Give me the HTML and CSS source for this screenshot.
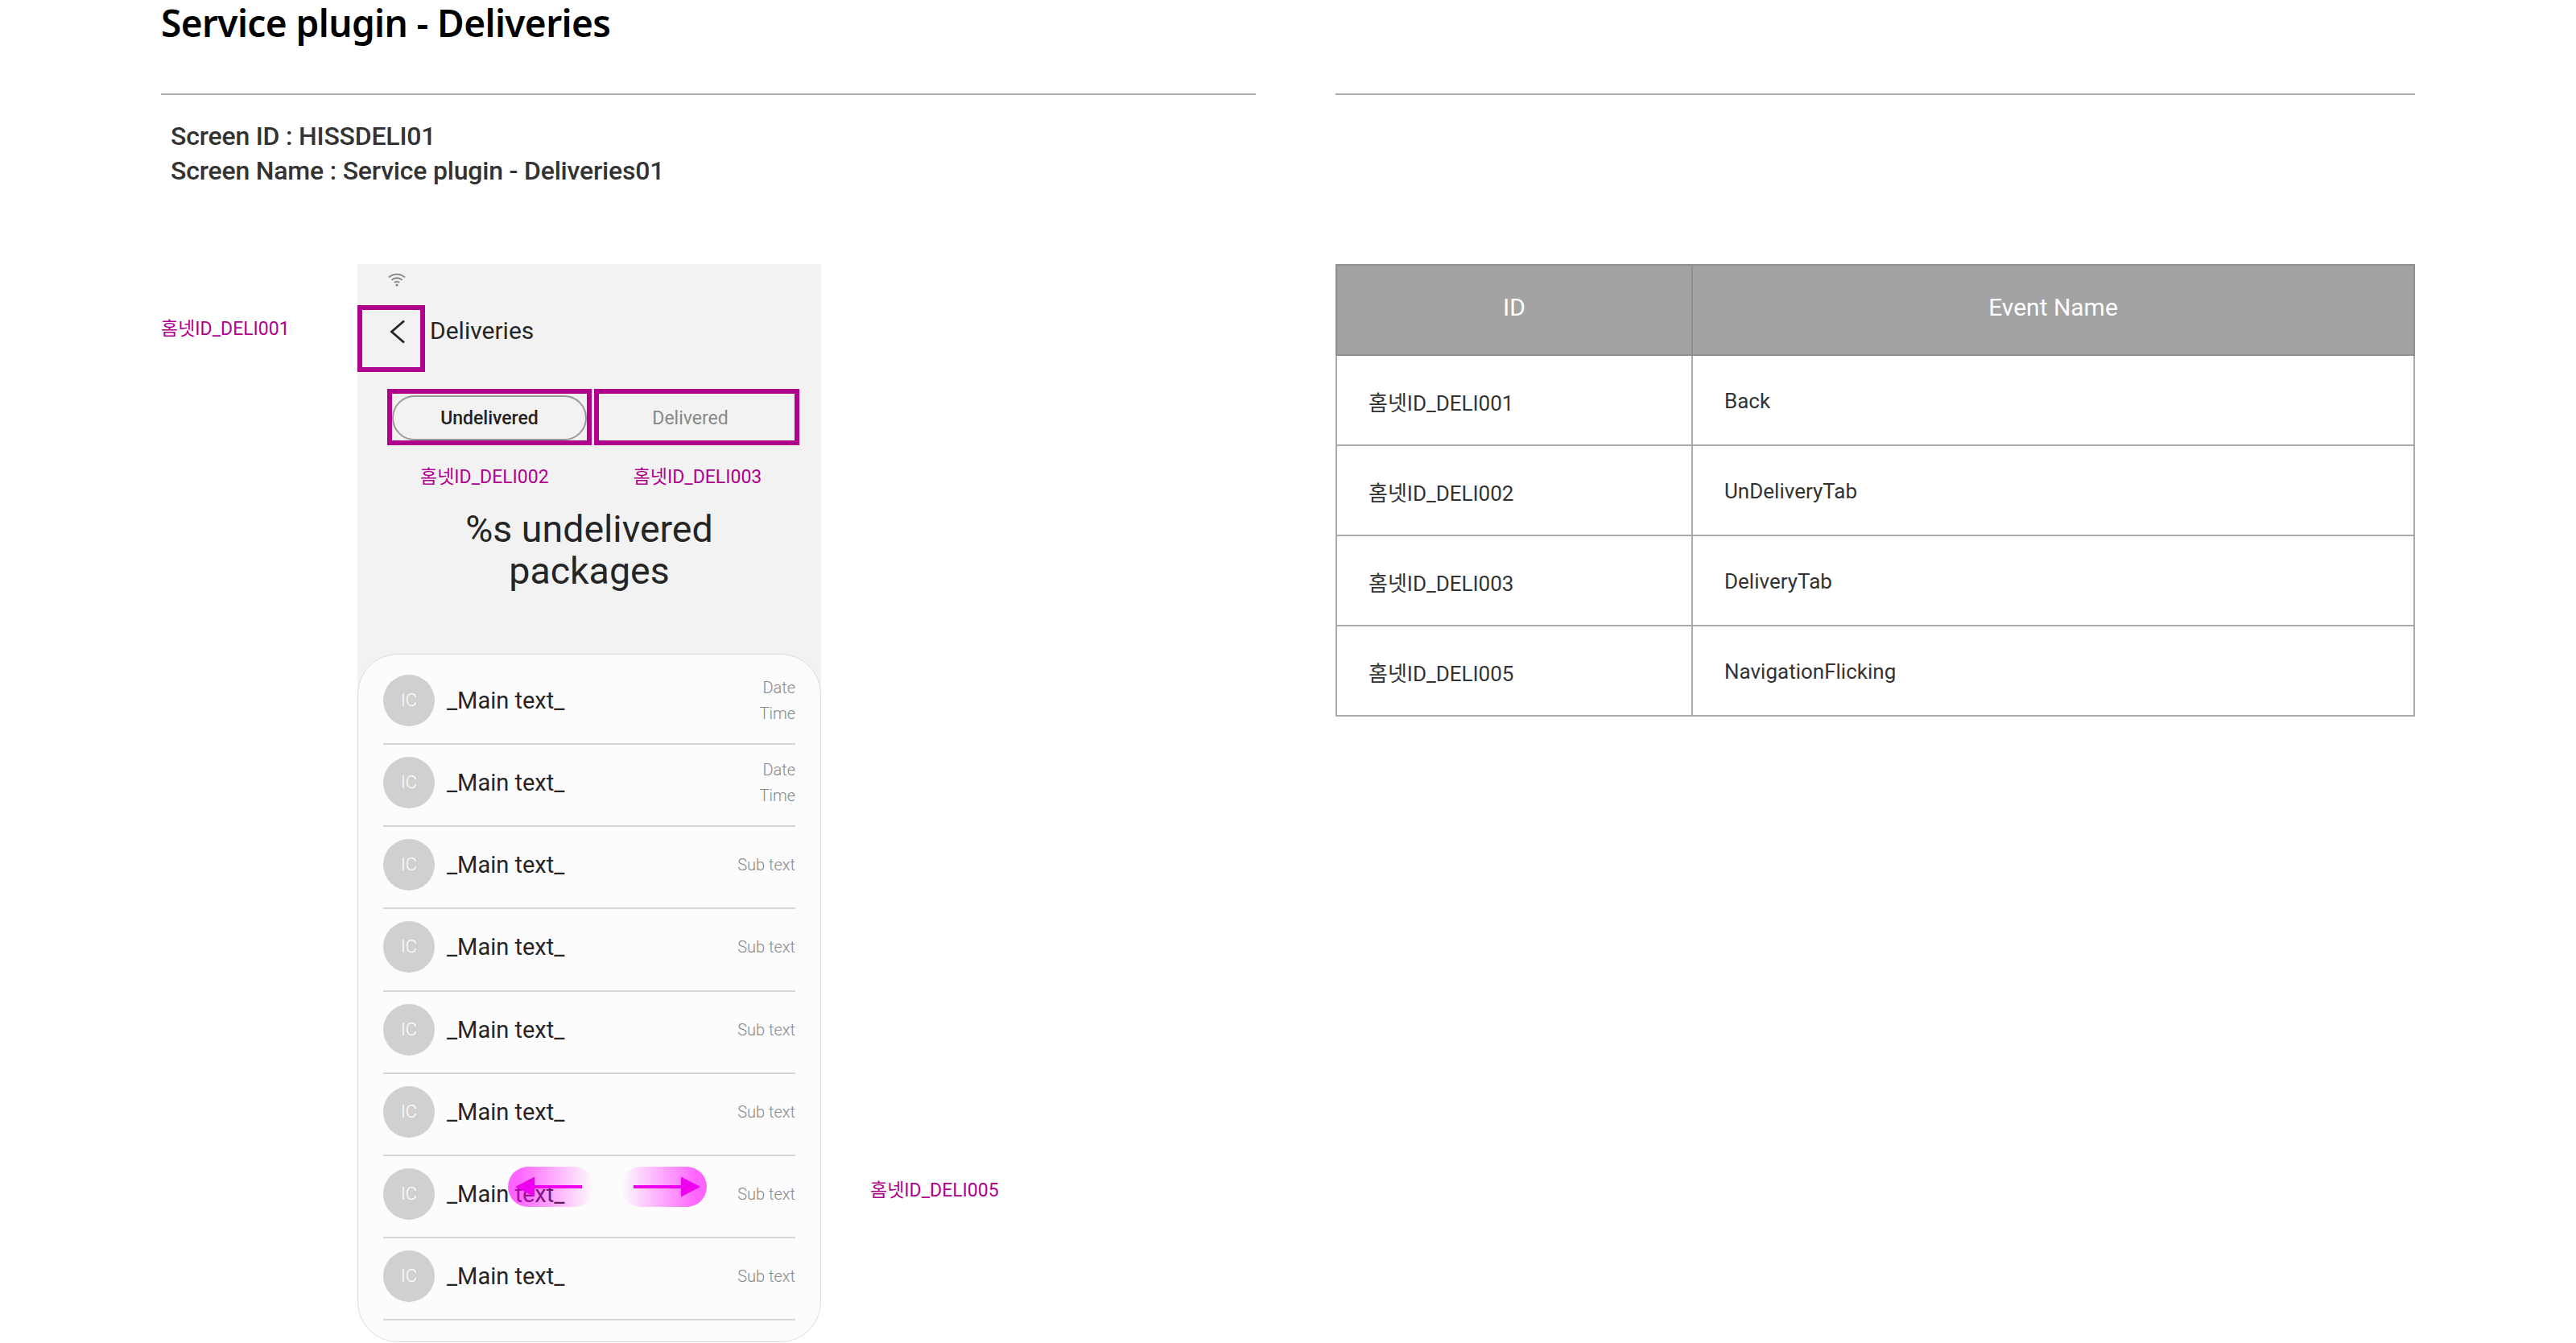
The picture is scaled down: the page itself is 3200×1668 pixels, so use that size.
FILE: index.html
```html
<!DOCTYPE html>
<html lang="en">

<head>
    <meta charset="UTF-8">
    <title>Service plugin - Deliveries</title>
    <link rel="stylesheet" href="styles.css">
</head>

<body>
    <div class="page">
        <div class="left-col">
            <h1 class="title">Service plugin - Deliveries</h1>
            <div class="screen-info">
                <div>Screen ID : HISSDELI01</div>
                <div>Screen Name : Service plugin - Deliveries01</div>
            </div>

            <div class="phone">
                <div class="note note-back">홈넷ID_DELI001</div>
                <div class="note note-flick">홈넷ID_DELI005</div>

                <div class="status-bar">
                    <svg class="wifi" viewBox="0 0 22 18" width="22" height="18">
                        <path d="M1 6.5C6.5 1.2 15.5 1.2 21 6.5" fill="none" stroke="#808080" stroke-width="1.8"/>
                        <path d="M4.4 9.8C8 6.4 14 6.4 17.6 9.8" fill="none" stroke="#808080" stroke-width="1.8"/>
                        <path d="M7.8 13C9.6 11.4 12.4 11.4 14.2 13" fill="none" stroke="#808080" stroke-width="1.8"/>
                        <circle cx="11" cy="16" r="1.6" fill="#808080"/>
                    </svg>
                </div>
                <div class="app-bar">
                    <div class="back-box">
                        <svg class="chevron" viewBox="0 0 20 30" width="20" height="30">
                            <path d="M18 1.5L2.5 15L18 28.5" fill="none" stroke="#252525" stroke-width="2.8"/>
                        </svg>
                    </div>
                    <div class="app-title">Deliveries</div>
                </div>
                <div class="tabs">
                    <div class="tab-box">
                        <div class="tab-pill">Undelivered</div>
                    </div>
                    <div class="tab-box tab-off">Delivered</div>
                </div>
                <div class="tab-notes">
                    <div class="note-tab-a">홈넷ID_DELI002</div>
                    <div class="note-tab-b">홈넷ID_DELI003</div>
                </div>
                <div class="headline">%s undelivered<br>packages</div>

                <div class="list">
                    <div class="row">
                        <div class="circle">IC</div>
                        <div class="main-text">_Main text_</div>
                        <div class="sub-text two-lines"><span>Date</span><span>Time</span></div>
                    </div>
                    <div class="row">
                        <div class="circle">IC</div>
                        <div class="main-text">_Main text_</div>
                        <div class="sub-text two-lines"><span>Date</span><span>Time</span></div>
                    </div>
                    <div class="row">
                        <div class="circle">IC</div>
                        <div class="main-text">_Main text_</div>
                        <div class="sub-text">Sub text</div>
                    </div>
                    <div class="row">
                        <div class="circle">IC</div>
                        <div class="main-text">_Main text_</div>
                        <div class="sub-text">Sub text</div>
                    </div>
                    <div class="row">
                        <div class="circle">IC</div>
                        <div class="main-text">_Main text_</div>
                        <div class="sub-text">Sub text</div>
                    </div>
                    <div class="row">
                        <div class="circle">IC</div>
                        <div class="main-text">_Main text_</div>
                        <div class="sub-text">Sub text</div>
                    </div>
                    <div class="row">
                        <div class="circle">IC</div>
                        <div class="main-text">_Main text_</div>
                        <div class="sub-text">Sub text</div>
                    </div>
                    <div class="row">
                        <div class="circle">IC</div>
                        <div class="main-text">_Main text_</div>
                        <div class="sub-text">Sub text</div>
                    </div>

                    <!-- flicking hint over the list -->
                    <div class="flick flick-left">
                        <svg viewBox="0 0 107 50" width="107" height="50">
                            <path d="M33 25H92" stroke="#ee00ee" stroke-width="4"/>
                            <path d="M9 25L33 12.5V37.5Z" fill="#ee00ee"/>
                        </svg>
                    </div>
                    <div class="flick flick-right">
                        <svg viewBox="0 0 107 50" width="107" height="50">
                            <path d="M16 25H75" stroke="#ee00ee" stroke-width="4"/>
                            <path d="M99 25L75 12.5V37.5Z" fill="#ee00ee"/>
                        </svg>
                    </div>
                </div>
            </div>
        </div>

        <div class="right-col">
            <div class="right-head"></div>
            <table class="event-table">
                <thead>
                    <tr>
                        <th class="col-id">ID</th>
                        <th>Event Name</th>
                    </tr>
                </thead>
                <tbody>
                    <tr>
                        <td>홈넷ID_DELI001</td>
                        <td>Back</td>
                    </tr>
                    <tr>
                        <td>홈넷ID_DELI002</td>
                        <td>UnDeliveryTab</td>
                    </tr>
                    <tr>
                        <td>홈넷ID_DELI003</td>
                        <td>DeliveryTab</td>
                    </tr>
                    <tr>
                        <td>홈넷ID_DELI005</td>
                        <td>NavigationFlicking</td>
                    </tr>
                </tbody>
            </table>
        </div>
    </div>
</body>

</html>
```

FILE: styles.css
```css
* {
    box-sizing: border-box;
}

body {
    margin: 0;
    padding: 0;
    background-color: #fff;
    font-family: 'Roboto', 'Noto Sans CJK KR', sans-serif;
    color: #333;
}

.page {
    width: 3200px;
    height: 1668px;
    overflow: hidden;
    padding: 0 200px;
    display: flex;
    gap: 99px;
}

.left-col {
    width: 1360px;
    flex: none;
}

.right-col {
    width: 1341px;
    flex: none;
}

.title {
    height: 118px;
    margin: 0;
    padding-top: 1px;
    font-family: 'Noto Sans', sans-serif;
    font-size: 46px;
    line-height: 54px;
    font-weight: 600;
    letter-spacing: -0.6px;
    color: #000;
    border-bottom: 2px solid #aaa;
}

.right-head {
    height: 118px;
    border-bottom: 2px solid #aaa;
}

.screen-info {
    height: 210px;
    padding: 30px 0 0 12px;
    font-size: 32px;
    line-height: 43px;
    font-weight: 500;
    letter-spacing: -0.2px;
    color: #333;
}

/* phone mock */
.phone {
    position: relative;
    width: 576px;
    margin-left: 244px;
    background: linear-gradient(#f2f2f2 535px, transparent 535px);
}

.note {
    position: absolute;
    font-size: 23px;
    line-height: 30px;
    color: #b0008e;
    white-space: nowrap;
}

.note-back {
    left: -244px;
    top: 66px;
}

.note-flick {
    left: 637px;
    top: 1136px;
}

.status-bar {
    height: 51px;
    padding: 10px 0 0 38px;
}

.wifi {
    display: block;
}

.app-bar {
    display: flex;
    align-items: center;
    height: 83px;
}

.back-box {
    width: 84px;
    height: 83px;
    border: 6px solid #b0008e;
    padding: 12px 0 0 34px;
}

.chevron {
    display: block;
}

.app-title {
    margin-left: 6px;
    margin-top: -20px;
    font-size: 30px;
    color: #252525;
}

.tabs {
    display: flex;
    gap: 3px;
    margin: 21px 0 0 37px;
}

.tab-box {
    width: 254px;
    height: 70px;
    border: 6px solid #b0008e;
    padding: 2px 0;
    font-size: 23px;
    font-weight: 500;
    color: #222;
}

.tab-pill {
    height: 56px;
    border: 2px solid #999;
    border-radius: 28px;
    text-align: center;
    line-height: 53px;
}

.tab-off {
    width: 255px;
    padding: 0 16px 0 0;
    text-align: center;
    line-height: 61px;
    font-weight: 400;
    color: #888;
}

.tab-notes {
    position: relative;
    display: flex;
    margin-top: 25px;
    padding-left: 78px;
    font-size: 23px;
    line-height: 30px;
    color: #b0008e;
}

.note-tab-b {
    margin-left: 105px;
}

.headline {
    margin-top: 23px;
    text-align: center;
    font-size: 46.5px;
    line-height: 52px;
    color: #252525;
}

.list {
    position: relative;
    height: 855px;
    margin-top: 77px;
    padding: 10px 31px 0;
    background-color: #fcfcfc;
    border: 1px solid #ddd;
    border-radius: 50px;
}

.row {
    display: flex;
    align-items: center;
    height: 102.14px;
    padding-bottom: 6px;
    border-bottom: 2px solid #d6d6d6;
}

.circle {
    width: 64px;
    height: 64px;
    flex: none;
    border-radius: 50%;
    background-color: #d0d0d0;
    color: #fff;
    font-weight: 300;
    font-size: 22px;
    line-height: 64px;
    text-align: center;
}

.main-text {
    flex: 1;
    margin-left: 15px;
    font-size: 29px;
    color: #252525;
}

.sub-text {
    font-weight: 300;
    font-size: 20px;
    color: #888;
    text-align: right;
}

.two-lines span {
    display: block;
    line-height: 32px;
}

.flick {
    position: absolute;
    top: 636px;
    width: 107px;
    height: 50px;
    border-radius: 25px;
}

.flick svg {
    display: block;
}

.flick-left {
    left: 186px;
    background: linear-gradient(to right, rgba(255, 0, 255, 0.6) 12%, rgba(255, 0, 255, 0));
}

.flick-right {
    left: 326px;
    background: linear-gradient(to left, rgba(255, 0, 255, 0.6) 12%, rgba(255, 0, 255, 0));
}

/* event table */
.event-table {
    width: 100%;
    margin-top: 210px;
    border-collapse: collapse;
    table-layout: fixed;
    font-size: 26px;
}

.event-table th {
    height: 112px;
    padding: 0 0 8px;
    background-color: #a3a3a3;
    border: 2px solid #8f8f8f;
    color: #fff;
    font-size: 30px;
    font-weight: 400;
}

.col-id {
    width: 442px;
}

.event-table td {
    height: 112px;
    padding: 2px 0 0 39px;
    border: 2px solid #aaa;
    color: #333;
}
```
